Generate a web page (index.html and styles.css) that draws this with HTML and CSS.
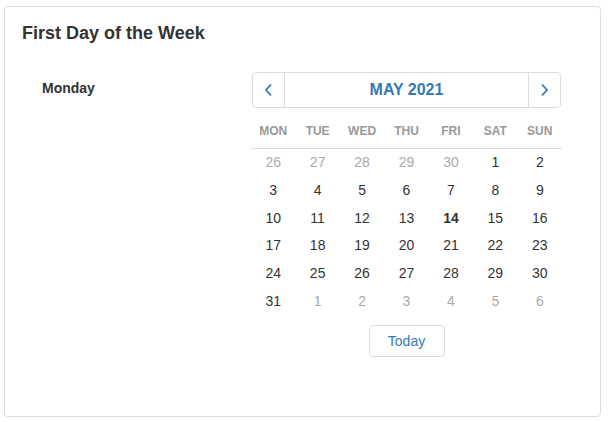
FILE: index.html
```html
<!DOCTYPE html>
<html>
<head>
<meta charset="utf-8">
<link rel="stylesheet" href="styles.css">
</head>
<body>
<div class="card">
  <h2 class="card-title">First Day of the Week</h2>
  <div class="row">
    <div class="label">Monday</div>
    <div class="calendar">
      <div class="nav">
        <button class="nav-btn" aria-label="Previous month">
          <svg width="9" height="14" viewBox="0 0 9 14"><path d="M7 1.5 L2 7 L7 12.5" fill="none" stroke="#337ab7" stroke-width="1.8"/></svg>
        </button>
        <div class="nav-title">MAY 2021</div>
        <button class="nav-btn" aria-label="Next month">
          <svg width="9" height="14" viewBox="0 0 9 14"><path d="M2 1.5 L7 7 L2 12.5" fill="none" stroke="#337ab7" stroke-width="1.8"/></svg>
        </button>
      </div>
      <div class="weekdays">
        <span>MON</span><span>TUE</span><span>WED</span><span>THU</span><span>FRI</span><span>SAT</span><span>SUN</span>
      </div>
      <div class="days">
        <span class="muted">26</span><span class="muted">27</span><span class="muted">28</span><span class="muted">29</span><span class="muted">30</span><span>1</span><span>2</span>
        <span>3</span><span>4</span><span>5</span><span>6</span><span>7</span><span>8</span><span>9</span>
        <span>10</span><span>11</span><span>12</span><span>13</span><span class="today">14</span><span>15</span><span>16</span>
        <span>17</span><span>18</span><span>19</span><span>20</span><span>21</span><span>22</span><span>23</span>
        <span>24</span><span>25</span><span>26</span><span>27</span><span>28</span><span>29</span><span>30</span>
        <span>31</span><span class="muted">1</span><span class="muted">2</span><span class="muted">3</span><span class="muted">4</span><span class="muted">5</span><span class="muted">6</span>
      </div>
      <div class="footer">
        <button class="today-btn">Today</button>
      </div>
    </div>
  </div>
</div>
</body>
</html>
```

FILE: styles.css
```css
* { box-sizing: border-box; }
html, body {
  margin: 0;
  background: #fff;
}
body {
  padding: 6px 7px 5px 4px;
  font-family: "Liberation Sans", Arial, sans-serif;
  color: #333;
}
.card {
  border: 1px solid #ddd;
  border-radius: 4px;
  height: 411px;
  padding: 16px 17px;
}
.card-title {
  margin: 0;
  font-size: 18px;
  font-weight: bold;
  line-height: 20px;
  color: #333;
}
.row {
  display: flex;
  margin-top: 29px;
  padding-left: 20px;
}
.label {
  width: 209px;
  font-size: 14px;
  font-weight: bold;
  padding-top: 8px;
}
.calendar {
  width: 311px;
}
.nav {
  display: flex;
  margin-left: 1px;
  width: 309px;
  height: 36px;
  border: 1px solid #ddd;
  border-radius: 4px;
}
.nav-btn {
  width: 32px;
  height: 100%;
  border: 0;
  background: #fff;
  padding: 0;
  display: flex;
  align-items: center;
  justify-content: center;
  border-radius: 4px;
}
.nav-btn:first-child { border-right: 1px solid #ddd; border-radius: 4px 0 0 4px; }
.nav-btn:last-child { border-left: 1px solid #ddd; border-radius: 0 4px 4px 0; }
.nav-title {
  flex: 1;
  text-align: center;
  font-size: 16px;
  font-weight: bold;
  color: #337ab7;
  line-height: 34px;
}
.weekdays {
  display: grid;
  grid-template-columns: repeat(7, 1fr);
  margin-top: 13px;
  height: 28px;
  border-bottom: 1px solid #ddd;
  font-size: 12px;
  font-weight: bold;
  color: #999;
  text-align: center;
  line-height: 20px;
}
.days {
  display: grid;
  grid-template-columns: repeat(7, 1fr);
  grid-auto-rows: 27.8px;
  font-size: 14px;
  text-align: center;
  line-height: 26px;
  color: #333;
}
.days .muted { color: #aaa; }
.days .today { font-weight: bold; }
.footer {
  display: flex;
  justify-content: center;
  margin-top: 9px;
}
.today-btn {
  width: 76px;
  height: 32px;
  border: 1px solid #ddd;
  border-radius: 4px;
  background: #fff;
  color: #337ab7;
  font-family: "Liberation Sans", Arial, sans-serif;
  font-size: 14px;
  padding: 0;
}
```
